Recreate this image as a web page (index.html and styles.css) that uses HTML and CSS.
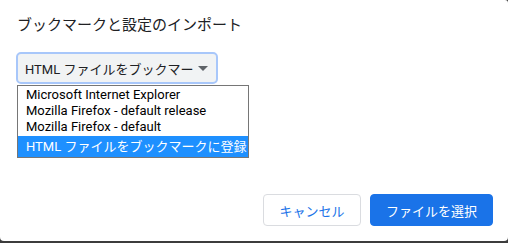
FILE: index.html
```html
<!DOCTYPE html>
<html lang="ja">
<head>
  <meta charset="UTF-8" />
  <title>ブックマークと設定のインポート</title>
  <link rel="stylesheet" href="styles.css">
</head>
<body>

  <div class="dialog">

    <!-- Título -->
    <div class="title">ブックマークと設定のインポート</div>

    <!-- Seletor -->
    <div class="picker">
      <div class="select">
        <span class="select-text">HTML ファイルをブックマークに登録</span>
        <span class="arrow"></span>
      </div>
      <ul class="popup">
        <li>Microsoft Internet Explorer</li>
        <li>Mozilla Firefox - default release</li>
        <li>Mozilla Firefox - default</li>
        <li class="selected">HTML ファイルをブックマークに登録</li>
      </ul>
    </div>

    <!-- Botões -->
    <div class="footer">
      <button class="btn btn-cancel">キャンセル</button>
      <button class="btn btn-primary">ファイルを選択</button>
    </div>

  </div>

</body>
</html>
```

FILE: styles.css
```css
body {
  margin: 0;
  padding: 0;
  background: #3c3c3c;
  font-family: Roboto, "Noto Sans CJK JP", sans-serif;
}

.dialog {
  background: #fff;
  width: 508px;
  height: 241px;
  box-sizing: border-box;
  border-radius: 0 3px 4px 4px;
  padding: 15px 15px 15px 16px;
  display: flex;
  flex-direction: column;
}

.title {
  font-size: 15px;
  line-height: 20px;
  color: #202124;
  padding-left: 1px;
}

/* Seletor */
.picker {
  position: relative;
  margin-top: 17px;
}
.select {
  width: 202px;
  height: 32px;
  box-sizing: border-box;
  background: #f1f3f4;
  border: 2px solid #a8c7fa;
  border-radius: 5px;
  display: flex;
  align-items: center;
  padding: 0 8px 0 7px;
  font-size: 13px;
  color: #202124;
}
.select-text {
  flex: 1;
  white-space: nowrap;
  overflow: hidden;
}
.arrow {
  width: 0;
  height: 0;
  margin-left: 4px;
  border-left: 5px solid transparent;
  border-right: 5px solid transparent;
  border-top: 5px solid #5f6368;
}

.popup {
  position: absolute;
  top: 33px;
  left: 1px;
  width: 232px;
  margin: 0;
  padding: 1px 0 0;
  box-sizing: border-box;
  list-style: none;
  background: #fff;
  border: 1px solid #767676;
  font-size: 13px;
  color: #000;
}
.popup li {
  height: 16px;
  line-height: 16px;
  padding-left: 8px;
  white-space: nowrap;
}
.popup li.selected {
  height: 21px;
  line-height: 21px;
  margin-top: 1px;
  background: #1e90ff;
  color: #fff;
}

/* Botões */
.footer {
  margin-top: auto;
  display: flex;
  justify-content: flex-end;
  gap: 9px;
}
.btn {
  height: 32px;
  box-sizing: border-box;
  border-radius: 4px;
  font-family: Roboto, "Noto Sans CJK JP", sans-serif;
  font-size: 13px;
  cursor: pointer;
}
.btn-cancel {
  width: 98px;
  background: #fff;
  border: 1px solid #dadce0;
  color: #1a73e8;
}
.btn-primary {
  width: 123px;
  background: #1a73e8;
  border: 1px solid #1a73e8;
  color: #fff;
}
```
